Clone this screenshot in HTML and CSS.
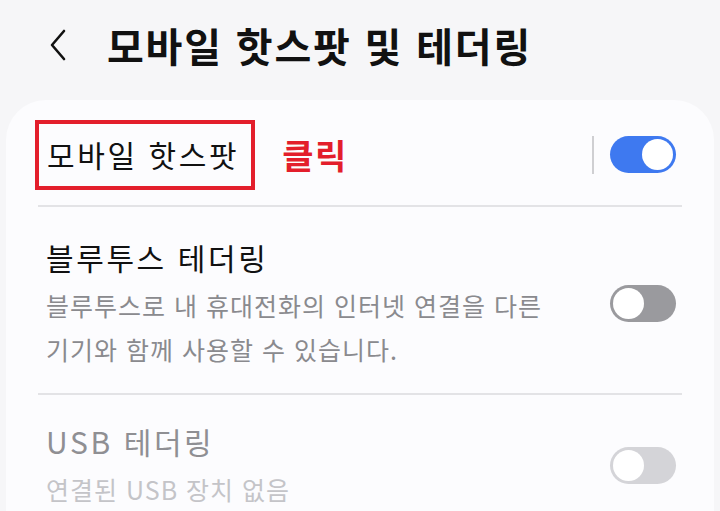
FILE: index.html
```html
<!DOCTYPE html>
<html lang="ko">
<head>
<meta charset="utf-8">
<link rel="stylesheet" href="styles.css">
</head>
<body>
<header class="top">
  <svg class="back" width="20" height="32" viewBox="0 0 20 32"><path d="M16 2 L4 16 L16 30" fill="none" stroke="#111" stroke-width="2.6" stroke-linecap="round" stroke-linejoin="round"/></svg>
  <h1 class="title">모바일 핫스팟 및 테더링</h1>
</header>
<main class="card">
  <section class="row row-first">
    <div class="texts">
      <div class="hl-wrap">
        <span class="hl-box"><span class="item-title">모바일 핫스팟</span></span>
        <span class="click">클릭</span>
      </div>
    </div>
    <div class="ctrl">
      <span class="vdiv"></span>
      <span class="toggle on"><span class="knob"></span></span>
    </div>
  </section>
  <section class="row row-mid">
    <div class="texts">
      <div class="item-title">블루투스 테더링</div>
      <div class="item-sub">블루투스로 내 휴대전화의 인터넷 연결을 다른<br>기기와 함께 사용할 수 있습니다.</div>
    </div>
    <div class="ctrl">
      <span class="toggle off"><span class="knob"></span></span>
    </div>
  </section>
  <section class="row row-last">
    <div class="texts">
      <div class="item-title dim">USB 테더링</div>
      <div class="item-sub dimmer">연결된 USB 장치 없음</div>
    </div>
    <div class="ctrl">
      <span class="toggle disabled"><span class="knob"></span></span>
    </div>
  </section>
</main>
</body>
</html>
```
FILE: styles.css
```css
html, body {
  margin: 0;
  padding: 0;
  background: #f6f6f8;
  font-family: "Noto Sans CJK KR", "Noto Sans", sans-serif;
  color: #111;
  width: 720px;
  height: 511px;
  overflow: hidden;
}
.top {
  height: 100px;
  display: flex;
  align-items: center;
  padding-left: 48px;
  box-sizing: border-box;
  padding-bottom: 10px;
}
.back {
  display: block;
  margin-right: 39px;
}
.title {
  margin: 0;
  font-size: 40px;
  font-weight: 700;
  letter-spacing: 1.8px;
  line-height: 1;
}
.card {
  margin: 0 6px;
  background: #fcfcfe;
  border-radius: 40px 40px 0 0;
  padding: 0 32px;
  height: 411px;
}
.row {
  display: flex;
  align-items: center;
  justify-content: space-between;
  border-bottom: 2px solid #e3e3e6;
  box-sizing: border-box;
}
.row-first { height: 107px; padding-top: 4px; }
.row-mid { height: 188px; padding-top: 6px; }
.row-last { border-bottom: none; height: 116px; padding-top: 24px; }
.texts { display: flex; flex-direction: column; padding-left: 8px; }
.hl-wrap { display: flex; align-items: center; margin-left: -11px; }
.hl-box {
  border: 4px solid #e31e2b;
  padding: 8px 12px 10px 8px;
  display: inline-block;
}
.click {
  color: #e31e2b;
  font-weight: 700;
  font-size: 34px;
  margin-left: 27px;
  letter-spacing: 1.5px;
  line-height: 1;
}
.item-title {
  font-size: 30px;
  line-height: 44px;
  letter-spacing: 2.6px;
  color: #111;
}
.item-sub {
  font-size: 25px;
  line-height: 44px;
  letter-spacing: 1px;
  color: #8a8a8e;
  margin-top: 4px;
}
.dim { color: #8f8f93; }
.dimmer { color: #c4c4c8; }
.ctrl {
  display: flex;
  align-items: center;
  padding-right: 6px;
}
.vdiv {
  width: 2px;
  height: 38px;
  background: #cfcfd2;
  margin-right: 16px;
}
.toggle {
  width: 66px;
  height: 37px;
  border-radius: 19px;
  display: flex;
  align-items: center;
  box-sizing: border-box;
  padding: 0 3px;
}
.knob {
  width: 31px;
  height: 31px;
  border-radius: 50%;
  background: #fff;
}
.toggle.on { background: #3e79f0; justify-content: flex-end; }
.toggle.off { background: #9a9a9e; }
.toggle.disabled { background: #d4d4d8; }
```
